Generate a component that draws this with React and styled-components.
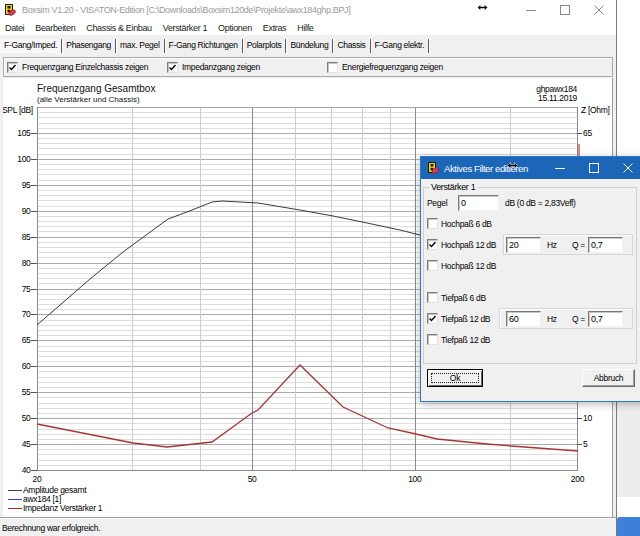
import React from 'react'
import styled, { createGlobalStyle, css } from 'styled-components'

const UI_FONT = `"Liberation Sans", Arial, sans-serif`

// the original UI font is a narrow bitmap face: emulate it with a slightly tighter Liberation Sans
const textS = css`font-size: 8.5px; letter-spacing: -0.3px;`
const textM = css`font-size: 9px; letter-spacing: -0.35px;`
const textL = css`font-size: 9.5px; letter-spacing: -0.4px;`

const GlobalStyle = createGlobalStyle`
  html, body { margin: 0; padding: 0; background: #fff; }
  body { font-family: ${UI_FONT}; font-size: 9px; color: #000; }
  * { box-sizing: border-box; }
`

const Screen = styled.div`
  position: relative;
  width: 640px;
  height: 536px;
  overflow: hidden;
  display: flex;
`

const MainWindow = styled.div`
  width: 617px;
  height: 536px;
  display: flex;
  flex-direction: column;
  background: #f0f0f0;
  border-right: 1px solid #7a7a7a;
`

const TitleBar = styled.div`
  height: ${p => p.$h || 20}px;
  flex: none;
  display: flex;
  align-items: center;
  background: ${p => p.$bg || '#fff'};
  color: ${p => p.$fg || '#9a9a9a'};
  padding-left: ${p => p.$pad || 4}px;
  gap: ${p => p.$gap || 6}px;
  white-space: nowrap;
  ${p => (p.$large ? textL : textM)}
`

const TitleText = styled.span`
  flex: 1;
  overflow: hidden;
`

const Controls = styled.div`
  display: flex;
  height: 100%;
`

const ControlBtn = styled.div`
  width: 34px;
  height: 100%;
  display: flex;
  align-items: center;
  justify-content: center;
`

const MenuBar = styled.div`
  height: 15px;
  flex: none;
  display: flex;
  align-items: center;
  gap: 11px;
  padding-left: 5px;
  background: #fff;
  color: #1a1a1a;
  ${textM}
`

const TabBar = styled.div`
  height: 21px;
  flex: none;
  display: flex;
  align-items: flex-start;
  padding-top: 4px;
`

const Tab = styled.div`
  height: 14px;
  line-height: 12px;
  padding: 0 4px;
  border-right: 1px solid #5a5a5a;
  box-shadow: 1px 0 0 #fff;
  background: ${p => (p.$active ? '#f7f7f7' : 'transparent')};
  white-space: nowrap;
  ${textS}
`

const Body = styled.div`
  flex: 1;
  display: flex;
  flex-direction: column;
  padding: 0 3px;
  min-height: 0;
`

const OptionsBox = styled.div`
  height: 20px;
  margin-top: 1px;
  flex: none;
  border: 1px solid #a9a9a9;
  box-shadow: inset 1px 1px 0 #fff;
  display: grid;
  grid-template-columns: 160px 160px 1fr;
  align-items: center;
  padding-left: 3px;
`

const CheckItem = styled.label`
  display: flex;
  align-items: center;
  gap: ${p => p.$gap || 4}px;
  white-space: nowrap;
  ${textS}
`

const Box = styled.span`
  width: 11px;
  height: 11px;
  flex: none;
  background: #fff;
  border: 1px solid;
  border-color: #7d7d7d #e2e2e2 #e2e2e2 #7d7d7d;
  box-shadow: inset 1px 1px 0 #c4c4c4;
  display: flex;
  align-items: center;
  justify-content: center;
`

const ChartArea = styled.div`
  flex: 1;
  margin-top: 1px;
  background: #fff;
  border-right: 1px solid #a0a0a0;
  display: flex;
  flex-direction: column;
  min-height: 0;
`

const ChartHeader = styled.div`
  height: 26px;
  flex: none;
  display: flex;
  justify-content: space-between;
  padding: 5px 35px 0 34px;
`

const ChartTitle = styled.div`
  font-size: 10px;
  line-height: 12px;
  color: #111;
`

const ChartSub = styled.div`
  font-size: 8px;
  line-height: 9px;
  color: #111;
`

const Stamp = styled.div`
  text-align: right;
  line-height: 9px;
  padding-top: 2px;
  ${textS}
`

const Legend = styled.div`
  padding-left: 5px;
  display: flex;
  flex-direction: column;
`

const LegendItem = styled.div`
  display: flex;
  align-items: center;
  height: 9px;
  line-height: 9px;
  gap: 1px;
  ${textS}
`

const Swatch = styled.span`
  width: 14px;
  height: 1px;
  background: ${p => p.$color};
`

const StatusBar = styled.div`
  height: 19px;
  flex: none;
  border-top: 1px solid #a0a0a0;
  box-shadow: inset 0 1px 0 #fff;
  display: flex;
  align-items: center;
  padding: 2px 0 0 2px;
  ${textS}
`

const Desktop = styled.div`
  flex: 1;
  display: flex;
  flex-direction: column;
  background: #fff;
`

const DesktopPart = styled.div`
  height: ${p => p.$h}px;
  flex: ${p => (p.$h ? 'none' : 1)};
  background: ${p => p.$c};
  border-top-left-radius: ${p => p.$r || 0}px;
`

const Cursor = styled.svg`
  position: absolute;
  left: ${p => p.$x}px;
  top: ${p => p.$y}px;
`

/* dialog */

const Dialog = styled.div`
  position: absolute;
  left: 420px;
  top: 156px;
  width: 226px;
  height: 246px;
  border: 1px solid #2b79d3;
  background: #f0f0f0;
  box-shadow: 0 2px 8px rgba(0, 0, 0, 0.28);
  display: flex;
  flex-direction: column;
`

const GroupBox = styled.fieldset`
  margin: 3px 8px 0 2px;
  padding: 0 3px 13px 3px;
  border: 1px solid #cfcfcf;
  min-width: 0;
`

const GroupLegend = styled.legend`
  padding: 0 2px;
  margin-left: 2px;
  line-height: 10px;
  ${textM}
`

const FormRow = styled.div`
  height: 21px;
  display: flex;
  align-items: center;
  margin-top: ${p => p.$gap || 0}px;
  white-space: nowrap;
  ${textS}
`

const FieldLabel = styled.span`
  width: ${p => p.$w}px;
  flex: none;
`

const Field = styled.input`
  width: ${p => p.$w}px;
  height: 16px;
  flex: none;
  padding: 0 2px;
  margin: 0 ${p => p.$mr || 0}px 0 0;
  background: #fff;
  border: 1px solid;
  border-color: #7a7a7a #f2f2f2 #f2f2f2 #7a7a7a;
  box-shadow: inset 1px 1px 0 #c8c8c8;
  font-family: ${UI_FONT};
  color: #000;
  outline: none;
  ${textM}
`

const Hint = styled.span`
  margin-left: 6px;
`

const FilterPanel = styled.div`
  margin-left: auto;
  width: ${p => p.$w}px;
  height: 21px;
  display: flex;
  align-items: center;
  justify-content: flex-end;
  padding-right: 9px;
  border: 1px solid #d6d6d6;
  box-shadow: inset 1px 1px 0 #fff;
`

const ButtonRow = styled.div`
  display: flex;
  justify-content: space-between;
  padding: 0 10px 0 6px;
  margin-top: 5px;
`

const Button = styled.div`
  width: ${p => p.$w}px;
  height: 18px;
  display: flex;
  align-items: center;
  justify-content: center;
  background: #f0f0f0;
  border: 1px solid;
  border-color: ${p => (p.$default ? '#000' : '#fff #6a6a6a #6a6a6a #fff')};
  box-shadow: ${p =>
    p.$default ? 'inset 1px 1px 0 #fff, inset -1px -1px 0 #6a6a6a' : 'inset -1px -1px 0 #a0a0a0'};
  ${textS}
`

const FocusRing = styled.span`
  width: calc(100% - 6px);
  height: calc(100% - 6px);
  border: 1px dotted #222;
  display: flex;
  align-items: center;
  justify-content: center;
`

/* drawings */

const BoxsimIcon = () => (
  <svg width="12" height="12" viewBox="0 0 12 12">
    <rect x="1.5" y="0.5" width="7" height="10" fill="#f6d200" stroke="#1a1a1a" />
    <rect x="3.5" y="2" width="3" height="2.5" fill="#1a1a1a" />
    <circle cx="5" cy="7" r="1.6" fill="#1a1a1a" />
    <ellipse cx="8.2" cy="8.6" rx="3.6" ry="2.2" transform="rotate(-35 8.2 8.6)" fill="#e23a52" stroke="#8a1020" strokeWidth="0.6" />
  </svg>
)

const MinIcon = ({ color }) => (
  <svg width="10" height="10" viewBox="0 0 10 10"><path d="M0 5.5H10" stroke={color} /></svg>
)
const MaxIcon = ({ color }) => (
  <svg width="10" height="10" viewBox="0 0 10 10"><rect x="0.5" y="0.5" width="9" height="9" fill="none" stroke={color} /></svg>
)
const CloseIcon = ({ color }) => (
  <svg width="10" height="10" viewBox="0 0 10 10"><path d="M0.5 0.5L9.5 9.5M9.5 0.5L0.5 9.5" stroke={color} /></svg>
)

const Tick = () => (
  <svg width="7" height="7" viewBox="0 0 7 7"><path d="M0.5 3.5L2.5 5.5L6.5 1" fill="none" stroke="#000" strokeWidth="1.4" /></svg>
)

const ResizeArrow = ({ x, y }) => (
  <Cursor $x={x} $y={y} width="11" height="7" viewBox="0 0 11 7">
    <path d="M0.5 3.5L3.5 0.5V2.5H7.5V0.5L10.5 3.5L7.5 6.5V4.5H3.5V6.5Z" fill="#000" stroke="#fff" strokeWidth="0.5" />
  </Cursor>
)

const Check = ({ checked, label, gap }) => (
  <CheckItem $gap={gap}>
    <Box>{checked && <Tick />}</Box>
    {label}
  </CheckItem>
)

/* chart */

const P = { left: 37, right: 577.5, top: 107, bottom: 470 }
const xOf = f => P.left + Math.log10(f / 20) * (P.right - P.left)
const yOf = db => P.top + ((110 - db) * (P.bottom - P.top)) / 70
const crisp = v => Math.round(v) + 0.5

const minorDb = []
for (let d = 41; d < 110; d++) if (d % 5) minorDb.push(d)
const majorDb = []
for (let d = 45; d <= 105; d += 5) majorDb.push(d)
const labelDb = []
for (let d = 40; d <= 105; d += 5) labelDb.push(d)
const tickZ = []
for (let z = 5; z <= 65; z += 5) tickZ.push(z)
// the other right-hand labels sit behind the dialog
const labelZ = [5, 10, 60, 65]
const minorF = [30, 40, 60, 70, 80, 90, 150]
const majorF = [50, 100]

const amplitude = [
  [37, 325], [90, 279], [123, 252], [168, 219], [187, 212], [212, 202], [222, 201],
  [258, 203], [300, 210], [333, 216], [367, 223], [400, 230], [420, 235], [470, 247],
  [520, 259], [577, 272],
]
const impedance = [
  [37, 424], [133, 443], [167, 447], [212, 442], [252, 413], [258, 410], [300, 365],
  [343, 407], [388, 428], [416, 434], [437, 439], [487, 444], [511, 446], [578, 451],
]
const pts = arr => arr.map(p => p.join(',')).join(' ')

const Plot = () => (
  <svg
    width="610"
    height="382"
    viewBox="3 104 610 382"
    style={{ display: 'block', flex: 'none' }}
    fontFamily={UI_FONT}
    fontSize="8.5"
    letterSpacing="-0.3"
  >
    <g shapeRendering="crispEdges">
      {minorDb.map(d => (
        <line key={'m' + d} x1={P.left} x2={577} y1={crisp(yOf(d))} y2={crisp(yOf(d))} stroke="#dedede" />
      ))}
      {majorDb.map(d => (
        <line key={'M' + d} x1={P.left} x2={577} y1={crisp(yOf(d))} y2={crisp(yOf(d))} stroke="#ababab" />
      ))}
      {minorF.map(f => (
        <line key={'f' + f} x1={crisp(xOf(f))} x2={crisp(xOf(f))} y1={P.top} y2={P.bottom} stroke="#cdcdcd" />
      ))}
      {majorF.map(f => (
        <line key={'F' + f} x1={crisp(xOf(f))} x2={crisp(xOf(f))} y1={P.top} y2={P.bottom} stroke="#8c8c8c" />
      ))}
      <line x1={37} x2={577} y1={107.5} y2={107.5} stroke="#a8a8a8" />
      <line x1={37} x2={578} y1={470.5} y2={470.5} stroke="#8c8c8c" />
      <line x1={37.5} x2={37.5} y1={107} y2={471} stroke="#8c8c8c" />
      <line x1={577.5} x2={577.5} y1={107} y2={471} stroke="#8c8c8c" />
      {labelDb.map(d => (
        <line key={'t' + d} x1={31} x2={37} y1={crisp(yOf(d))} y2={crisp(yOf(d))} stroke="#555" />
      ))}
      {tickZ.map(z => (
        <line key={'z' + z} x1={577} x2={582} y1={crisp(yOf(z + 40))} y2={crisp(yOf(z + 40))} stroke="#555" />
      ))}
      <line x1={578.5} x2={578.5} y1={144} y2={160} stroke="#d88a8a" strokeWidth="2" />
    </g>
    <text x={2} y={113}>SPL [dB]</text>
    <text x={581} y={113}>Z [Ohm]</text>
    {labelDb.map(d => (
      <text key={'l' + d} x={30.5} y={yOf(d) + 3} textAnchor="end">{d}</text>
    ))}
    {labelZ.map(z => (
      <text key={'r' + z} x={583} y={yOf(z + 40) + 3}>{z}</text>
    ))}
    {[20, 50, 100, 200].map(f => (
      <text key={'x' + f} x={xOf(f)} y={482} textAnchor="middle">{f}</text>
    ))}
    <polyline points={pts(amplitude)} fill="none" stroke="#3a3a3a" strokeWidth="1" />
    <polyline points={pts(impedance)} fill="none" stroke="#aa3434" strokeWidth="1.3" />
  </svg>
)

const menus = ['Datei', 'Bearbeiten', 'Chassis & Einbau', 'Verstärker 1', 'Optionen', 'Extras', 'Hilfe']
const tabs = ['F-Gang/Imped.', 'Phasengang', 'max. Pegel', 'F-Gang Richtungen', 'Polarplots', 'Bündelung', 'Chassis', 'F-Gang elektr.']

const FilterRow = ({ label, checked, panelWidth, freq, gap }) => (
  <FormRow $gap={gap}>
    <Check checked={checked} label={label} gap={3} />
    {panelWidth && (
      <FilterPanel $w={panelWidth}>
        <Field $w={35} $mr={6} readOnly value={freq} />
        <FieldLabel $w={25}>Hz</FieldLabel>
        <FieldLabel $w={16}>Q =</FieldLabel>
        <Field $w={35} readOnly value="0,7" />
      </FilterPanel>
    )}
  </FormRow>
)

export default function App() {
  return (
    <>
      <GlobalStyle />
      <Screen>
        <MainWindow>
          <TitleBar>
            <BoxsimIcon />
            <TitleText>{'Boxsim V1.20 - VISATON-Edition [C:\\Downloads\\Boxsim120de\\Projekte\\awx184ghp.BPJ]'}</TitleText>
            <Controls>
              <ControlBtn><MinIcon color="#8a8a8a" /></ControlBtn>
              <ControlBtn><MaxIcon color="#8a8a8a" /></ControlBtn>
              <ControlBtn><CloseIcon color="#8a8a8a" /></ControlBtn>
            </Controls>
          </TitleBar>
          <MenuBar>
            {menus.map(m => <span key={m}>{m}</span>)}
          </MenuBar>
          <TabBar>
            {tabs.map((t, i) => (
              <Tab key={t} $active={i === 0}>{t}</Tab>
            ))}
          </TabBar>
          <Body>
            <OptionsBox>
              <Check checked label="Frequenzgang Einzelchassis zeigen" />
              <Check checked label="Impedanzgang zeigen" />
              <Check label="Energiefrequenzgang zeigen" />
            </OptionsBox>
            <ChartArea>
              <ChartHeader>
                <div>
                  <ChartTitle>Frequenzgang Gesamtbox</ChartTitle>
                  <ChartSub>(alle Verstärker und Chassis)</ChartSub>
                </div>
                <Stamp>
                  <div>ghpawx184</div>
                  <div>15.11.2019</div>
                </Stamp>
              </ChartHeader>
              <Plot />
              <Legend>
                <LegendItem><Swatch $color="#404040" />Amplitude gesamt</LegendItem>
                <LegendItem><Swatch $color="#3c3cff" />awx184 [1]</LegendItem>
                <LegendItem><Swatch $color="#a83030" />Impedanz Verstärker 1</LegendItem>
              </Legend>
            </ChartArea>
          </Body>
          <StatusBar>Berechnung war erfolgreich.</StatusBar>
        </MainWindow>
        <Desktop>
          <DesktopPart $c="#fff" />
          <DesktopPart $h={97} $c="#ededed" />
          <DesktopPart $h={20} $c="#fff" />
          <DesktopPart $h={19} $c="#3d80dc" $r={3} />
        </Desktop>

        <ResizeArrow x={477} y={4} />

        <Dialog>
          <TitleBar $h={22} $bg="#1c66b8" $fg="#fff" $large $pad={6} $gap={5}>
            <BoxsimIcon />
            <TitleText>Aktives Filter editieren</TitleText>
            <Controls>
              <ControlBtn><MinIcon color="#fff" /></ControlBtn>
              <ControlBtn><MaxIcon color="#fff" /></ControlBtn>
              <ControlBtn><CloseIcon color="#fff" /></ControlBtn>
            </Controls>
          </TitleBar>
          <GroupBox>
            <GroupLegend>Verstärker 1</GroupLegend>
            <FormRow>
              <FieldLabel $w={31}>Pegel</FieldLabel>
              <Field $w={41} readOnly value="0" />
              <Hint>dB (0 dB = 2,83Veff)</Hint>
            </FormRow>
            <FilterRow label="Hochpaß 6 dB" />
            <FilterRow label="Hochpaß 12 dB" checked panelWidth={130} freq="20" />
            <FilterRow label="Hochpaß 12 dB" />
            <FilterRow label="Tiefpaß 6 dB" gap={11} />
            <FilterRow label="Tiefpaß 12 dB" checked panelWidth={134} freq="60" />
            <FilterRow label="Tiefpaß 12 dB" />
          </GroupBox>
          <ButtonRow>
            <Button $w={56} $default><FocusRing>Ok</FocusRing></Button>
            <Button $w={53}>Abbruch</Button>
          </ButtonRow>
        </Dialog>

        <ResizeArrow x={507} y={162} />
      </Screen>
    </>
  )
}
